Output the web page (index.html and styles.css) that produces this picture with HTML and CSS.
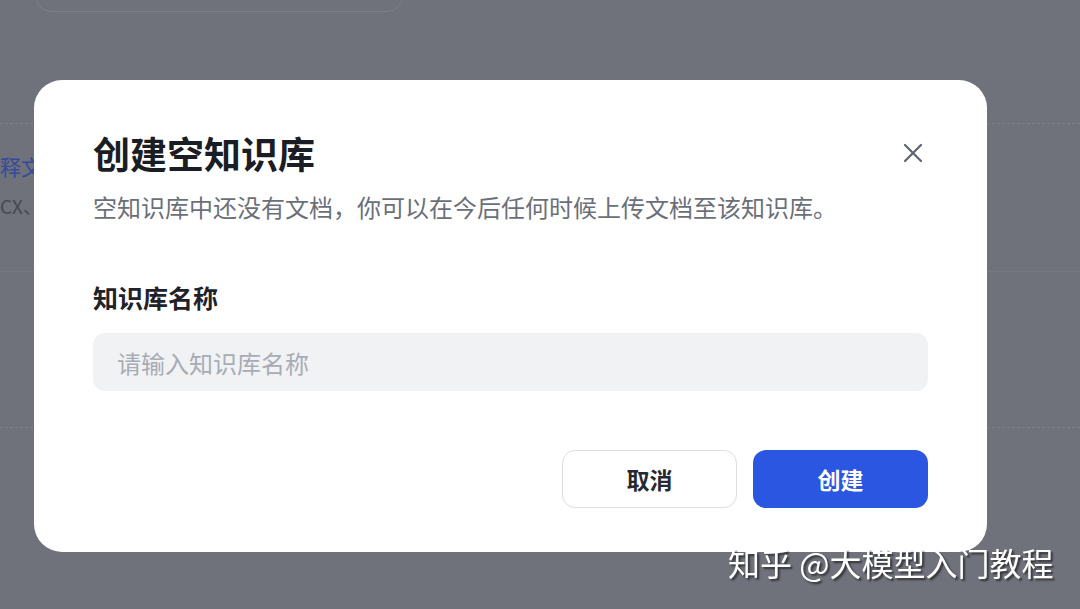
FILE: index.html
```html
<!DOCTYPE html>
<html lang="zh-CN">
<head>
    <meta charset="UTF-8">
    <meta name="viewport" content="width=device-width, initial-scale=1.0">
    <title>创建空知识库</title>
    <link rel="stylesheet" href="styles.css">
</head>
<body>
    <!-- page behind the mask -->
    <div class="page">
        <div class="top-card"></div>
        <div class="upload-list">
            <div class="upload-item">
                <p class="upload-link">释文件</p>
                <p class="upload-hint">CX、PDF</p>
            </div>
            <div class="upload-item tall"></div>
            <div class="upload-item"></div>
        </div>
    </div>

    <div class="mask">
        <div class="dialog">
            <div class="dialog-head">
                <h2 class="dialog-title">创建空知识库</h2>
                <button class="close-btn" aria-label="关闭">
                    <svg width="20" height="20" viewBox="0 0 20 20">
                        <path d="M2 2 L18 18 M18 2 L2 18" stroke="#5f636e" stroke-width="2.2" stroke-linecap="round" fill="none"/>
                    </svg>
                </button>
            </div>
            <p class="dialog-desc">空知识库中还没有文档，你可以在今后任何时候上传文档至该知识库。</p>

            <label class="field-label" for="kb-name">知识库名称</label>
            <input id="kb-name" class="field-input" type="text" placeholder="请输入知识库名称">

            <div class="dialog-foot">
                <button class="btn btn-cancel">取消</button>
                <button class="btn btn-primary">创建</button>
            </div>
        </div>

        <div class="watermark">知乎 @大模型入门教程</div>
    </div>
</body>
</html>
```

FILE: styles.css
```css
body {
    margin: 0;
    background: #6f717b;
    font-family: "Noto Sans CJK SC", "Noto Sans", sans-serif;
    overflow: hidden;
    height: 609px;
}

.page {
    height: 609px;
}

.top-card {
    width: 366px;
    height: 30px;
    margin-left: 35px;
    margin-top: -20px;
    border: 1px solid #7c7e88;
    border-radius: 16px;
}

.upload-list {
    margin-top: 111px;
}
.upload-item {
    border-top: 1px dashed #7d7f89;
    height: 148px;
    padding-top: 27px;
    box-sizing: border-box;
}
.upload-item.tall {
    height: 156px;
    border-top-style: solid;
    border-top-color: #767882;
}
.upload-link {
    margin: 0;
    font-size: 21px;
    color: #36499a;
    line-height: 30px;
}
.upload-hint {
    margin: 11px 0 0;
    font-size: 19px;
    color: #464852;
    line-height: 28px;
}

.mask {
    position: fixed;
    inset: 0;
}

.dialog {
    position: absolute;
    left: 34px;
    top: 80px;
    width: 953px;
    height: 472px;
    box-sizing: border-box;
    padding: 49px 59px 44px;
    background: #fff;
    border-radius: 28px;
    display: flex;
    flex-direction: column;
}

.dialog-head {
    display: flex;
    align-items: center;
    justify-content: space-between;
    height: 48px;
}
.dialog-title {
    margin: 0;
    font-size: 37px;
    line-height: 48px;
    font-weight: 700;
    color: #1b1d24;
}
.close-btn {
    border: none;
    background: none;
    padding: 0;
    width: 20px;
    height: 20px;
    margin-right: 5px;
    cursor: pointer;
    display: flex;
}

.dialog-desc {
    margin: 15px 0 0;
    font-size: 24px;
    line-height: 30px;
    color: #6b6f79;
}

.field-label {
    margin-top: 60px;
    font-size: 25px;
    line-height: 30px;
    font-weight: 700;
    color: #1f2229;
}

.field-input {
    margin-top: 21px;
    height: 58px;
    box-sizing: border-box;
    border: none;
    outline: none;
    border-radius: 12px;
    background: #f1f2f4;
    padding: 0 24px;
    font-family: inherit;
    font-size: 24px;
    color: #1f2229;
}
.field-input::placeholder {
    color: #a8acb5;
}

.dialog-foot {
    margin-top: 59px;
    display: flex;
    justify-content: flex-end;
    gap: 16px;
}
.btn {
    width: 175px;
    height: 58px;
    border-radius: 13px;
    font-family: inherit;
    font-size: 23px;
    font-weight: 700;
    cursor: pointer;
}
.btn-cancel {
    background: #fff;
    border: 1px solid #dcdee3;
    color: #262930;
}
.btn-primary {
    background: #2b56e2;
    border: none;
    color: #fff;
}

.watermark {
    position: absolute;
    left: 728px;
    top: 542px;
    font-size: 32px;
    line-height: 40px;
    color: #fff;
    text-shadow: 2px 2px 2px rgba(0, 0, 0, 0.55);
    white-space: nowrap;
}
```
